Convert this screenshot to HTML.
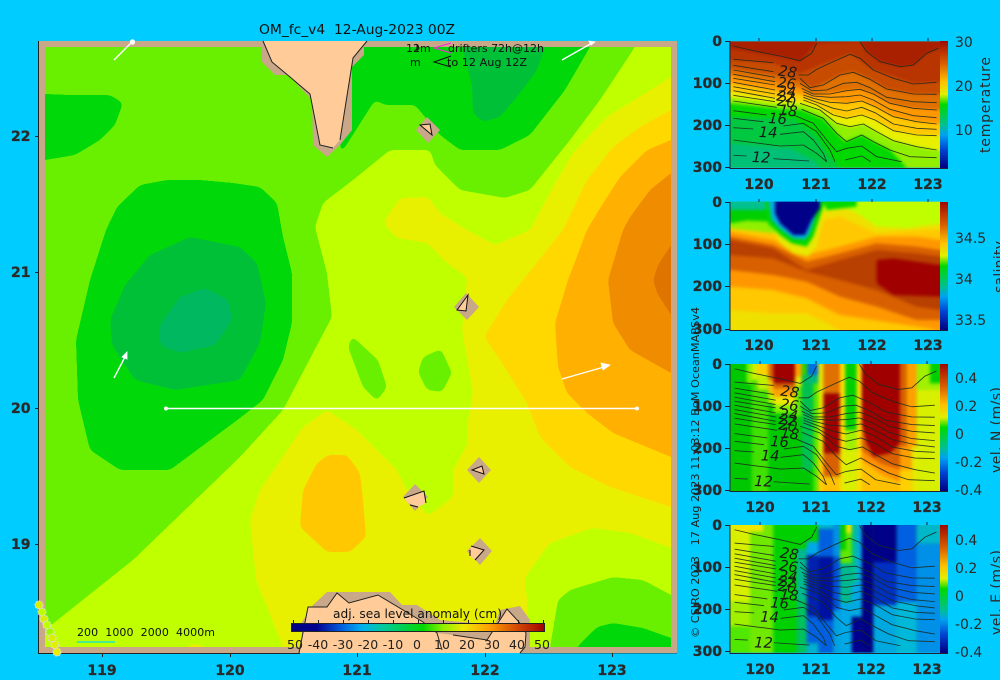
<!DOCTYPE html>
<html><head><meta charset="utf-8"><style>
html,body{margin:0;padding:0;background:#00ccff;width:1000px;height:680px;overflow:hidden}
svg{display:block;font-family:"DejaVu Sans","Liberation Sans",sans-serif}
.b{font-weight:bold;font-size:14px;fill:#2a2a2a;stroke:#2a2a2a;stroke-width:.3}
.n{font-size:14px;fill:#2a2a2a}
.c{font-size:44px;fill:#1a1a1a;font-style:italic}
.k{font-size:11px;fill:#111}
.cb{font-size:12.5px;fill:#222;text-anchor:middle}
</style></head><body>
<svg width="1000" height="680" viewBox="0 0 1000 680" xmlns="http://www.w3.org/2000/svg">
<defs>
<filter id="sm" x="-30%" y="-30%" width="160%" height="160%" color-interpolation-filters="sRGB"><feGaussianBlur stdDeviation="3"/><feComponentTransfer><feFuncA type="linear" slope="40" intercept="-19.5"/></feComponentTransfer></filter>
<filter id="bl" x="-5%" y="-5%" width="110%" height="110%" color-interpolation-filters="sRGB"><feGaussianBlur stdDeviation="5"/><feComponentTransfer><feFuncA type="linear" slope="100" intercept="0"/></feComponentTransfer></filter>
<clipPath id="mapc"><rect x="45" y="47" width="626" height="600"/></clipPath>
<clipPath id="c1"><rect x="150" y="64" width="630" height="379"/></clipPath>
<clipPath id="c2"><rect x="150" y="545" width="630" height="385"/></clipPath>
<clipPath id="c3"><rect x="150" y="42" width="630" height="381"/></clipPath>
<clipPath id="c4"><rect x="150" y="525" width="630" height="383"/></clipPath>
<linearGradient id="vb" x1="0" y1="0" x2="0" y2="1">
<stop offset="0" stop-color="#a00800"/><stop offset=".18" stop-color="#d86000"/><stop offset=".32" stop-color="#ffc000"/><stop offset=".42" stop-color="#e0f000"/><stop offset=".5" stop-color="#00d800"/><stop offset=".66" stop-color="#00c090"/><stop offset=".74" stop-color="#00a0f0"/><stop offset=".86" stop-color="#0040d0"/><stop offset="1" stop-color="#000080"/>
</linearGradient>
<linearGradient id="hb" x1="0" y1="0" x2="1" y2="0">
<stop offset="0" stop-color="#000080"/><stop offset=".1" stop-color="#000090"/><stop offset=".2" stop-color="#0060e0"/><stop offset=".28" stop-color="#00b0f0"/><stop offset=".36" stop-color="#00c8a0"/><stop offset=".52" stop-color="#00d800"/><stop offset=".6" stop-color="#90f000"/><stop offset=".68" stop-color="#f0e800"/><stop offset=".78" stop-color="#ffa000"/><stop offset=".88" stop-color="#d85000"/><stop offset="1" stop-color="#a00000"/>
</linearGradient>
<g id="cont" fill="none" stroke="#1c2a20" stroke-width="2.6" stroke-linejoin="round" stroke-opacity=".9">
<polyline points="160,78 220,92 300,108 360,122 395,100 410,70"/>
<polyline points="540,65 560,95 600,125 660,140 700,135 740,100 775,85"/>
<polyline points="160,118 280,128"/>
<polyline points="355,165 385,165 410,148 460,125 510,103 540,115 580,150 640,175 700,192 770,187"/>
<polyline points="160,136 280,155"/><polyline points="360,175 390,203 430,195 480,165 520,157 570,178 620,207 700,222 770,223"/>
<polyline points="160,150 285,172"/><polyline points="360,190 395,212 440,210 490,190 530,187 570,203 620,232 700,245 770,248"/>
<polyline points="160,163 285,185"/><polyline points="365,205 400,222 450,222 500,212 540,208 580,222 630,250 700,265 770,270"/>
<polyline points="160,175 285,195"/><polyline points="370,215 400,228 450,232 500,230 540,225 580,240 630,268 700,287 770,293"/>
<polyline points="160,187 285,210"/><polyline points="370,225 400,235 450,247 500,250 545,243 585,260 640,290 710,305 770,312"/>
<polyline points="160,200 285,222"/><polyline points="370,232 400,243 460,265 500,273 545,262 585,278 640,312 710,325 770,328"/>
<polyline points="160,212 285,235"/><polyline points="370,240 410,255 460,285 500,295 545,285 585,300 640,332 710,345 770,347"/>
<polyline points="160,226 285,245"/><polyline points="360,250 420,270 470,310 510,320 550,312 590,335 640,362 710,380 770,390"/>
<polyline points="160,243 290,262"/><polyline points="365,268 430,295 470,340 500,365 545,345 580,365 630,390 690,410 770,413"/>
<polyline points="160,272 260,285"/><polyline points="340,285 400,310 440,360 470,395 500,385 545,378 590,410 665,425"/>
<polyline points="160,295 250,305"/><polyline points="310,318 370,310 410,335 450,390 465,425"/>
<polyline points="160,323 220,327"/><polyline points="300,343 370,335 400,360 430,400 440,425"/>
<polyline points="160,360 300,378 370,375 410,400 440,425"/>
<polyline points="160,406 200,408"/><polyline points="280,416 388,423"/>
<polyline points="495,420 545,408 572,425"/>
</g>
</defs>

<rect width="1000" height="680" fill="#00ccff"/>

<!-- MAP -->
<rect x="39" y="41" width="638" height="612" fill="#c8a888"/>
<g clip-path="url(#mapc)">
<rect x="45" y="47" width="626" height="600" fill="#c0ff00"/>
<polygon filter="url(#sm)" fill="#e8f000" points="700,60 671,77 607,117 573,153 553,187 530,230 495,245 467,230 440,213 428,197 400,198 383,223 397,238 427,243 447,263 467,277 462,330 473,393 467,427 468,443 453,470 453,497 428,516 407,490 397,470 357,430 327,410 303,427 260,490 250,520 256,580 283,647 290,680 520,680 528,647 527,600 525,577 550,543 593,528 630,533 671,548 700,560"/>
<polygon filter="url(#sm)" fill="#e8f000" points="177,660 190,644 203,645 212,660"/>
<polygon filter="url(#sm)" fill="#ffd800" points="700,95 671,110 640,127 613,147 587,180 563,230 523,280 507,300 484,337 500,360 527,403 540,437 570,467 610,487 671,507 700,520"/>
<polygon filter="url(#sm)" fill="#ffc800" points="328,455 347,455 360,473 363,500 366,537 350,552 327,552 300,527 303,490 317,463"/>
<polygon filter="url(#sm)" fill="#ffb000" points="700,125 671,140 647,150 620,177 597,213 587,230 568,280 555,323 558,367 567,393 587,413 613,433 671,457 700,470"/>
<polygon filter="url(#sm)" fill="#f08c00" points="700,160 671,173 650,190 630,217 623,230 608,280 613,323 630,350 671,373 700,385"/>
<polygon filter="url(#sm)" fill="#e07400" points="700,225 671,245 658,265 653,280 657,293 671,315 700,340"/>
<polygon filter="url(#sm)" fill="#69f000" points="20,20 640,20 635,47 600,100 570,140 530,190 505,198 460,190 435,165 430,150 390,150 353,180 323,203 315,227 327,273 332,317 313,353 283,410 240,457 133,560 45,630 20,650"/>
<polygon filter="url(#sm)" fill="#69f000" points="352,336 378,360 387,387 377,401 363,387 348,347"/>
<polygon filter="url(#sm)" fill="#69f000" points="441,349 452,373 442,392 427,390 418,372 423,357"/>
<polygon filter="url(#sm)" fill="#69f000" points="550,670 550,647 558,600 570,590 613,577 643,580 671,595 700,610 700,670"/>
<polygon filter="url(#sm)" fill="#00d80a" points="577,670 577,647 597,627 613,623 643,628 671,638 700,645 700,670"/>
<polygon filter="url(#sm)" fill="#00d80a" points="340,155 375,100 385,105 415,105 440,135 460,150 500,150 530,135 565,90 590,47 600,20 352,20 340,100"/>
<polygon filter="url(#sm)" fill="#00d80a" points="20,93 70,95 110,95 123,103 115,125 100,140 75,155 45,160 20,165"/>
<polygon filter="url(#sm)" fill="#00d80a" points="106,230 117,207 140,185 167,180 200,180 233,183 260,187 277,203 283,237 292,273 292,323 283,360 263,400 240,418 170,470 120,470 90,450 78,400 76,340 90,280"/>
<polygon filter="url(#sm)" fill="#00c038" points="462,20 462,47 472,85 473,113 483,122 500,117 520,93 537,70 545,47 550,20"/>
<polygon filter="url(#sm)" fill="#00c038" points="190,237 240,247 257,263 266,303 260,343 240,380 175,390 135,380 112,345 110,320 125,285 150,255"/>
<polygon filter="url(#sm)" fill="#00b860" points="205,288 228,300 232,320 215,345 180,353 160,345 160,325 180,297"/>
</g>

<!-- land -->
<polygon fill="#c8a888" points="262,41 262,62 275,75 288,75 312,100 313,145 327,157 340,145 352,130 352,67 364,55 364,41"/>
<polygon fill="#ffcc99" points="263,41 272,62 290,77 310,94 320,145 333,148 340,140 353,58 367,41"/>
<polyline fill="none" stroke="#222" stroke-width="1" points="263,41 272,62 290,77 310,94 320,145 333,148"/>
<polyline fill="none" stroke="#222" stroke-width="1" points="340,140 353,58 367,41"/>
<polygon fill="#c8a888" points="427,117 440,130 428,143 416,130"/>
<polygon fill="#ffcc99" points="420,125 430,124 432,135"/>
<polygon fill="none" stroke="#111" stroke-width="1" points="420,125 430,124 432,135"/>
<polygon fill="#c8a888" points="466,293 479,307 467,320 454,307"/>
<polygon fill="#ffcc99" stroke="#111" stroke-width="1" points="468,295 457,310 466,311"/>
<polygon fill="#c8a888" points="479,457 491,470 479,483 467,470"/>
<polygon fill="#ffcc99" stroke="#111" stroke-width="1" points="472,470 482,466 484,474"/>
<polygon fill="#c8a888" points="415,484 428,497 415,511 403,497"/>
<polygon fill="#ffcc99" points="404,498 424,491 426,503 418,507 408,503"/>
<polyline fill="none" stroke="#111" stroke-width="1" points="404,498 424,491 426,503"/>
<polyline fill="none" stroke="#111" stroke-width="1" points="410,505 418,507"/>
<polygon fill="#c8a888" points="480,538 492,551 480,565 467,551"/>
<polygon fill="#ffcc99" points="471,546 484,550 475,560 470,556"/>
<polyline fill="none" stroke="#111" stroke-width="1" points="471,546 484,550 475,560"/>
<polyline fill="none" stroke="#111" stroke-width="1" points="470,550 470,556"/>

<polygon fill="#c8a888" points="280,647 302,647 302,622 313,605 327,592 390,592 402,605 417,605 440,620 495,625 500,610 520,606 530,620 530,647 530,653 280,653"/>
<polygon fill="#ffcc99" points="299,653 308,607 327,607 337,593 349,603 378,595 423,622 437,633 453,635 487,640 507,609 519,622 526,633 525,647 520,653"/>
<polyline fill="none" stroke="#222" stroke-width="1" points="299,653 308,607 327,607 337,593 349,603 378,595 423,622 437,633 442,650"/>
<polyline fill="none" stroke="#222" stroke-width="1" points="453,635 487,640 507,609 519,622 526,633 525,647 520,653"/>

<line x1="38.5" y1="41" x2="38.5" y2="653.5" stroke="#222" stroke-width="1"/>
<line x1="38" y1="653.5" x2="300" y2="653.5" stroke="#222" stroke-width="1"/>
<line x1="520" y1="653.5" x2="677" y2="653.5" stroke="#222" stroke-width="1" stroke-opacity=".4"/>

<!-- map ticks -->
<g stroke="#222" stroke-width="1">
<line x1="35" y1="136.5" x2="39" y2="136.5"/><line x1="35" y1="272.5" x2="39" y2="272.5"/><line x1="35" y1="408.5" x2="39" y2="408.5"/><line x1="35" y1="544.5" x2="39" y2="544.5"/>
<line x1="102.5" y1="653" x2="102.5" y2="657"/><line x1="230.5" y1="653" x2="230.5" y2="657"/><line x1="357.5" y1="653" x2="357.5" y2="657"/><line x1="485.5" y1="653" x2="485.5" y2="657"/><line x1="612.5" y1="653" x2="612.5" y2="657"/>
</g>
<g>
<text x="11" y="141" class="b">22</text><text x="11" y="277" class="b">21</text><text x="11" y="413" class="b">20</text><text x="11" y="549" class="b">19</text>
<text x="102" y="675" text-anchor="middle" class="b">119</text><text x="230" y="675" text-anchor="middle" class="b">120</text><text x="357" y="675" text-anchor="middle" class="b">121</text><text x="485" y="675" text-anchor="middle" class="b">122</text><text x="612" y="675" text-anchor="middle" class="b">123</text>
</g>

<!-- track and arrows -->
<line x1="166" y1="408.5" x2="637" y2="408.5" stroke="#fff" stroke-width="1.4"/>
<circle cx="166" cy="408.5" r="2" fill="#fff"/><circle cx="637" cy="408.5" r="2" fill="#fff"/>
<g stroke="#fff" stroke-width="1.4" fill="#fff">
<line x1="114" y1="60" x2="132" y2="42"/><circle cx="132.500" cy="42" r="2"/>
<line x1="562" y1="60" x2="592" y2="43"/><polygon points="595,42 589,41 591,45" stroke-width=".8"/>
<line x1="114" y1="378" x2="126" y2="355"/><polygon points="127,352 122,357 127,359" stroke-width=".8"/>
<line x1="562" y1="379" x2="604" y2="367"/><polygon points="610,365 601,363 603,370" stroke-width=".8"/>
</g>

<!-- dots -->
<g stroke="#dde" stroke-width="1" stroke-dasharray="2 1">
<circle cx="39" cy="605" r="4" fill="#d8f000"/><circle cx="42" cy="612" r="4" fill="#c0ff00"/><circle cx="44" cy="619" r="4" fill="#d8f000"/><circle cx="47" cy="625" r="4" fill="#c0ff00"/><circle cx="50" cy="632" r="4" fill="#a0f800"/><circle cx="52" cy="638" r="4" fill="#d8f000"/><circle cx="55" cy="645" r="4" fill="#e0f000"/><circle cx="57" cy="652" r="4" fill="#e8f000"/>
</g>

<!-- title and legends -->
<text x="259" y="34" font-size="13.5" fill="#111" textLength="196" lengthAdjust="spacingAndGlyphs" xml:space="preserve">OM_fc_v4  12-Aug-2023 00Z</text>
<text x="406" y="52" class="k">12m</text>
<text x="448" y="52" class="k" textLength="96" lengthAdjust="spacingAndGlyphs">drifters 72h@12h</text>
<text x="410" y="66" class="k">m</text>
<text x="447" y="66" class="k" textLength="80" lengthAdjust="spacingAndGlyphs">to 12 Aug 12Z</text>
<polyline fill="none" stroke="#ff20e0" stroke-width="1" points="451,43 434,48 451,53"/>
<polyline fill="none" stroke="#111" stroke-width="1" points="451,56 434,62 451,67"/>
<polygon fill="none" stroke="#111" stroke-width="1" points="417,45 419,48 417,51"/>

<text x="77" y="636" class="k" textLength="138" xml:space="preserve">200  1000  2000  4000m</text>
<line x1="77" y1="642" x2="115" y2="642" stroke="#00e0e0" stroke-width="1.2"/>

<text x="333" y="618" font-size="12" fill="#111" textLength="169" lengthAdjust="spacingAndGlyphs">adj. sea level anomaly (cm)</text>
<rect x="291" y="623" width="254" height="9" fill="url(#hb)"/>
<rect x="291.500" y="623.500" width="253" height="8" fill="none" stroke="#222" stroke-width="1"/>
<g stroke="#222" stroke-width="1">
<line x1="293.500" y1="620" x2="293.500" y2="623"/><line x1="318.500" y1="620" x2="318.500" y2="623"/><line x1="343.500" y1="620" x2="343.500" y2="623"/><line x1="368.500" y1="620" x2="368.500" y2="623"/><line x1="393.500" y1="620" x2="393.500" y2="623"/><line x1="418.500" y1="620" x2="418.500" y2="623"/><line x1="443.500" y1="620" x2="443.500" y2="623"/><line x1="468.500" y1="620" x2="468.500" y2="623"/><line x1="493.500" y1="620" x2="493.500" y2="623"/><line x1="518.500" y1="620" x2="518.500" y2="623"/><line x1="543.500" y1="620" x2="543.500" y2="623"/>
</g>
<g>
<text x="295" y="649" class="cb">50</text><text x="318" y="649" class="cb">-40</text><text x="343" y="649" class="cb">-30</text><text x="368" y="649" class="cb">-20</text><text x="393" y="649" class="cb">-10</text><text x="417" y="649" class="cb">0</text><text x="442" y="649" class="cb">10</text><text x="467" y="649" class="cb">20</text><text x="492" y="649" class="cb">30</text><text x="517" y="649" class="cb">40</text><text x="542" y="649" class="cb">50</text>
</g>

<!-- PANEL 1 temperature -->
<g transform="translate(680,20) scale(.33333)">
<g clip-path="url(#c1)">
<g filter="url(#bl)">
<rect x="150" y="64" width="630" height="379" fill="#a82000"/>
<polygon fill="#b83400" points="150,85 300,110 360,125 410,70 540,64 560,95 600,125 660,140 700,135 740,100 780,85 780,443 150,443"/>
<polygon fill="#c84c00" points="150,120 280,130 360,160 410,140 510,100 580,150 700,190 780,185 780,443 150,443"/>
<polygon fill="#e07000" points="150,145 285,165 360,185 400,205 480,165 520,155 570,178 620,207 700,222 780,223 780,443 150,443"/>
<polygon fill="#ff9800" points="150,165 285,188 365,205 400,225 500,212 540,208 580,222 630,250 700,265 780,270 780,443 150,443"/>
<polygon fill="#ffc800" points="150,190 285,212 370,225 400,235 500,250 545,243 585,260 640,290 710,305 780,312 780,443 150,443"/>
<polygon fill="#e8f000" points="150,215 285,235 370,242 410,255 460,285 500,295 545,285 585,300 640,332 710,345 780,347 780,443 150,443"/>
<polygon fill="#90f000" points="150,232 285,250 360,252 420,272 470,310 510,322 550,312 590,335 640,362 710,380 780,392 780,443 150,443"/>
<polygon fill="#00d800" points="150,250 290,265 365,270 430,297 470,340 495,365 545,345 580,365 630,390 680,443 150,443"/>
<polygon fill="#00c840" points="150,290 340,295 410,345 450,410 480,443 150,443"/>
<polygon fill="#00c078" points="150,370 330,385 400,420 420,443 150,443"/>
</g>
<use href="#cont"/>
</g>
<text class="c" transform="translate(293,166) rotate(8)">28</text>
<text class="c" transform="translate(290,201) rotate(8)">26</text>
<text class="c" transform="translate(290,226) rotate(8)">24</text>
<text class="c" transform="translate(288,241) rotate(8)">22</text>
<text class="c" transform="translate(290,256) rotate(8)">20</text>
<text class="c" transform="translate(295,284) rotate(6)">18</text>
<text class="c" transform="translate(264,309) rotate(4)">16</text>
<text class="c" transform="translate(236,351) rotate(2)">14</text>
<text class="c" transform="translate(215,426) rotate(2)">12</text>
</g>

<!-- PANEL 2 salinity -->
<g transform="translate(680,20) scale(.33333)">
<g clip-path="url(#c2)">
<g filter="url(#bl)">
<rect x="150" y="545" width="630" height="385" fill="#f0e000"/>
<polygon fill="#c0ff00" points="430,545 780,545 780,610 680,625 590,620 540,585 500,565 430,575"/>
<polygon fill="#ffc800" points="150,620 280,640 380,690 430,600 480,590 590,640 710,630 780,630 780,930 480,930 380,880 280,880 150,870"/>
<polygon fill="#ff9800" points="150,635 280,660 380,705 480,680 590,650 710,650 780,660 780,930 480,885 380,835 280,810 150,800"/>
<polygon fill="#d86000" points="150,650 280,675 380,725 480,700 590,670 710,680 780,690 780,900 710,900 590,860 480,830 380,785 280,765 150,750"/>
<polygon fill="#b84000" points="150,660 280,685 380,750 480,720 590,690 710,700 780,710 780,870 710,860 590,810 480,780 380,755 280,715 150,705"/>
<polygon fill="#a00000" points="590,720 640,715 780,735 780,830 640,825 590,790"/>
<rect x="150" y="545" width="115" height="27" fill="#00c090"/>
<polygon fill="#00d000" points="150,570 265,570 265,605 200,602 150,612"/>
<polygon fill="#90f000" points="150,610 200,602 265,605 290,640 150,625"/>
<polygon fill="#e8e800" points="265,600 430,560 430,600 410,680 385,710 340,700 300,670"/>
<polygon fill="#00d800" points="430,545 530,545 530,560 440,570"/>
<polygon fill="#00d800" points="255,545 435,545 420,590 400,650 380,680 335,670 300,645 265,612"/>
<polygon fill="#00b0e0" points="265,545 425,545 408,580 388,640 375,658 340,655 305,630 275,600"/>
<polygon fill="#000088" points="285,545 420,545 420,565 395,600 375,645 340,645 300,610 285,580"/>
</g>
</g>
</g>

<!-- PANEL 3 vel N -->
<g transform="translate(680,350) scale(.33333)">
<g clip-path="url(#c3)">
<g filter="url(#bl)">
<rect x="150" y="42" width="630" height="381" fill="#00c800"/>
<rect x="215" y="42" width="50" height="381" fill="#40e000"/>
<rect x="200" y="42" width="15" height="58" fill="#80f000"/>
<rect x="215" y="42" width="17" height="48" fill="#d0f000"/>
<rect x="232" y="42" width="33" height="33" fill="#ffd000"/><rect x="232" y="75" width="33" height="45" fill="#c0f000"/>
<rect x="265" y="42" width="15" height="48" fill="#e06000"/><rect x="265" y="90" width="15" height="40" fill="#ffc000"/><rect x="265" y="130" width="15" height="30" fill="#c0f000"/>
<rect x="280" y="42" width="65" height="58" fill="#a00000"/><rect x="280" y="100" width="65" height="15" fill="#d86000"/><rect x="280" y="115" width="65" height="25" fill="#ffa000"/><rect x="280" y="140" width="65" height="25" fill="#f0e800"/><rect x="280" y="165" width="65" height="25" fill="#80f000"/>
<rect x="345" y="42" width="20" height="38" fill="#ffa000"/><rect x="345" y="80" width="20" height="30" fill="#e8e800"/><rect x="345" y="110" width="20" height="90" fill="#60e800"/>
<rect x="365" y="42" width="17" height="33" fill="#30d000"/><rect x="365" y="75" width="35" height="285" fill="#00c050"/>
<rect x="382" y="42" width="33" height="33" fill="#0070e0"/><rect x="382" y="75" width="33" height="25" fill="#00b880"/>
<rect x="400" y="100" width="15" height="323" fill="#50e800"/>
<rect x="415" y="42" width="17" height="381" fill="#e8e800"/><rect x="415" y="320" width="17" height="103" fill="#ffd000"/>
<rect x="430" y="42" width="50" height="88" fill="#e07000"/><rect x="430" y="130" width="50" height="180" fill="#a00000"/><rect x="430" y="310" width="50" height="70" fill="#d86000"/><rect x="430" y="380" width="50" height="43" fill="#ffc000"/>
<rect x="480" y="42" width="15" height="258" fill="#ffe000"/><rect x="480" y="300" width="15" height="123" fill="#e8e800"/>
<rect x="495" y="42" width="35" height="198" fill="#00d000"/><rect x="495" y="240" width="35" height="60" fill="#a0f000"/><rect x="495" y="300" width="35" height="123" fill="#d8f000"/>
<rect x="530" y="42" width="15" height="381" fill="#ffe000"/>
<rect x="545" y="42" width="120" height="381" fill="#ffc000"/>
<polygon fill="#ff9000" points="545,42 665,42 665,400 600,370 545,330"/>
<polygon fill="#d86000" points="545,42 665,42 665,360 600,340 545,300"/>
<polygon fill="#a00000" points="545,42 660,42 660,280 630,310 580,320 560,280 545,220"/>
<rect x="660" y="42" width="20" height="250" fill="#d86000"/><rect x="660" y="290" width="35" height="70" fill="#ffa000"/><rect x="660" y="360" width="35" height="63" fill="#ffd000"/>
<rect x="680" y="42" width="30" height="250" fill="#ffa000"/>
<rect x="695" y="290" width="17" height="133" fill="#e8e800"/>
<rect x="710" y="42" width="70" height="381" fill="#d8f000"/>
<rect x="710" y="42" width="70" height="78" fill="#a0f000"/>
<rect x="750" y="42" width="30" height="58" fill="#00d000"/>
</g>
<use href="#cont" transform="translate(6,-22) scale(.985,1.003)"/>
</g>
<text class="c" transform="translate(300,136) rotate(8)">28</text>
<text class="c" transform="translate(298,176) rotate(8)">26</text>
<text class="c" transform="translate(296,206) rotate(8)">24</text>
<text class="c" transform="translate(294,221) rotate(8)">22</text>
<text class="c" transform="translate(294,238) rotate(8)">20</text>
<text class="c" transform="translate(300,263) rotate(6)">18</text>
<text class="c" transform="translate(270,288) rotate(4)">16</text>
<text class="c" transform="translate(242,331) rotate(2)">14</text>
<text class="c" transform="translate(222,408) rotate(2)">12</text>
</g>

<!-- PANEL 4 vel E -->
<g transform="translate(680,350) scale(.33333)">
<g clip-path="url(#c4)">
<g filter="url(#bl)">
<rect x="150" y="525" width="630" height="383" fill="#00d000"/>
<rect x="150" y="525" width="60" height="230" fill="#d8f000"/><rect x="150" y="755" width="60" height="75" fill="#a0f000"/><rect x="150" y="830" width="60" height="78" fill="#50e800"/>
<rect x="210" y="525" width="70" height="383" fill="#70e800"/>
<rect x="165" y="525" width="85" height="20" fill="#f0e800"/>
<rect x="280" y="525" width="70" height="383" fill="#00d000"/>
<rect x="350" y="596" width="30" height="154" fill="#00b890"/><rect x="350" y="750" width="30" height="158" fill="#00c060"/>
<rect x="380" y="575" width="35" height="40" fill="#00a8e8"/><rect x="380" y="615" width="35" height="185" fill="#0020b0"/><rect x="380" y="800" width="35" height="80" fill="#0060e0"/><rect x="380" y="880" width="35" height="28" fill="#00b0d0"/>
<rect x="415" y="525" width="45" height="11" fill="#00b8d0"/><rect x="415" y="536" width="45" height="84" fill="#0060e0"/><rect x="415" y="620" width="45" height="190" fill="#0010a0"/><rect x="415" y="810" width="45" height="98" fill="#0060e0"/>
<rect x="460" y="525" width="20" height="95" fill="#0090e8"/><rect x="460" y="620" width="20" height="160" fill="#0050d8"/><rect x="460" y="780" width="20" height="128" fill="#00a0e0"/>
<rect x="480" y="600" width="35" height="40" fill="#60e800"/><rect x="480" y="640" width="35" height="120" fill="#00b890"/><rect x="480" y="760" width="35" height="148" fill="#00a8e8"/>
<rect x="498" y="525" width="17" height="25" fill="#f0e800"/><rect x="498" y="550" width="17" height="90" fill="#60e800"/>
<rect x="515" y="525" width="15" height="175" fill="#00c090"/><rect x="515" y="700" width="15" height="100" fill="#00a8e8"/><rect x="515" y="800" width="30" height="108" fill="#000090"/>
<rect x="530" y="525" width="15" height="275" fill="#00a8e8"/>
<rect x="545" y="525" width="35" height="383" fill="#000085"/>
<rect x="580" y="525" width="70" height="111" fill="#000088"/><rect x="580" y="636" width="70" height="130" fill="#0030c0"/><rect x="580" y="766" width="70" height="142" fill="#00a8e0"/>
<rect x="650" y="525" width="60" height="231" fill="#0060e0"/><rect x="650" y="756" width="60" height="152" fill="#00b8d8"/>
<rect x="710" y="525" width="70" height="55" fill="#00b8c8"/><rect x="710" y="580" width="70" height="328" fill="#0090e8"/>
</g>
<use href="#cont" transform="translate(6,461) scale(.985,1.003)"/>
</g>
<text class="c" transform="translate(298,622) rotate(8)">28</text>
<text class="c" transform="translate(296,660) rotate(8)">26</text>
<text class="c" transform="translate(294,690) rotate(8)">24</text>
<text class="c" transform="translate(292,706) rotate(8)">22</text>
<text class="c" transform="translate(292,722) rotate(8)">20</text>
<text class="c" transform="translate(298,747) rotate(6)">18</text>
<text class="c" transform="translate(270,772) rotate(4)">16</text>
<text class="c" transform="translate(240,815) rotate(2)">14</text>
<text class="c" transform="translate(222,892) rotate(2)">12</text>
</g>

<!-- panel frames, colorbars -->
<g fill="url(#vb)">
<rect x="940" y="41" width="8" height="127"/><rect x="940" y="202" width="8" height="128"/><rect x="940" y="364" width="8" height="127"/><rect x="940" y="525" width="8" height="128"/>
</g>
<g fill="none" stroke="#223" stroke-width="1">
<path d="M730,41V168.500H948M730,202V330.500H948M730,364V491.500H948M730,525V653.500H948"/>
<path d="M725,41.500H730M725,83.500H730M725,125.500H730M725,167.500H730M725,202.500H730M725,244.500H730M725,286.500H730M725,329.500H730M725,364.500H730M725,406.500H730M725,448.500H730M725,490.500H730M725,525.500H730M725,567.500H730M725,609.500H730M725,651.500H730"/>
<path d="M759,41V38M816,41V38M872,41V38M928,41V38M759,202V199M816,202V199M872,202V199M928,202V199M760,364V361M816,364V361M871,364V361M927,364V361M760,525V522M816,525V522M871,525V522M927,525V522"/>
</g>
<g>
<text x="722" y="46" text-anchor="end" class="b">0</text><text x="722" y="88" text-anchor="end" class="b">100</text><text x="722" y="130" text-anchor="end" class="b">200</text><text x="722" y="172" text-anchor="end" class="b">300</text>
<text x="722" y="207" text-anchor="end" class="b">0</text><text x="722" y="249" text-anchor="end" class="b">100</text><text x="722" y="291" text-anchor="end" class="b">200</text><text x="722" y="334" text-anchor="end" class="b">300</text>
<text x="722" y="369" text-anchor="end" class="b">0</text><text x="722" y="411" text-anchor="end" class="b">100</text><text x="722" y="453" text-anchor="end" class="b">200</text><text x="722" y="495" text-anchor="end" class="b">300</text>
<text x="722" y="530" text-anchor="end" class="b">0</text><text x="722" y="572" text-anchor="end" class="b">100</text><text x="722" y="614" text-anchor="end" class="b">200</text><text x="722" y="656" text-anchor="end" class="b">300</text>
<text x="759" y="189" text-anchor="middle" class="b">120</text><text x="816" y="189" text-anchor="middle" class="b">121</text><text x="872" y="189" text-anchor="middle" class="b">122</text><text x="928" y="189" text-anchor="middle" class="b">123</text>
<text x="759" y="350" text-anchor="middle" class="b">120</text><text x="816" y="350" text-anchor="middle" class="b">121</text><text x="872" y="350" text-anchor="middle" class="b">122</text><text x="928" y="350" text-anchor="middle" class="b">123</text>
<text x="760" y="512" text-anchor="middle" class="b">120</text><text x="816" y="512" text-anchor="middle" class="b">121</text><text x="871" y="512" text-anchor="middle" class="b">122</text><text x="927" y="512" text-anchor="middle" class="b">123</text>
<text x="760" y="674" text-anchor="middle" class="b">120</text><text x="816" y="674" text-anchor="middle" class="b">121</text><text x="871" y="674" text-anchor="middle" class="b">122</text><text x="927" y="674" text-anchor="middle" class="b">123</text>
</g>
<g>
<text x="955" y="47" class="n">30</text><text x="955" y="91" class="n">20</text><text x="955" y="135" class="n">10</text>
<text x="955" y="243" class="n">34.5</text><text x="955" y="284" class="n">34</text><text x="955" y="325" class="n">33.5</text>
<text x="955" y="383" class="n">0.4</text><text x="955" y="411" class="n">0.2</text><text x="955" y="439" class="n">0</text><text x="955" y="467" class="n">-0.2</text><text x="955" y="495" class="n">-0.4</text>
<text x="955" y="545" class="n">0.4</text><text x="955" y="573" class="n">0.2</text><text x="955" y="601" class="n">0</text><text x="955" y="629" class="n">-0.2</text><text x="955" y="657" class="n">-0.4</text>
</g>
<text transform="translate(990,153) rotate(-90)" class="n" font-size="14" textLength="96">temperature</text>
<text transform="translate(1004,293) rotate(-90)" class="n" textLength="52">salinity</text>
<text transform="translate(1001,473) rotate(-90)" class="n" textLength="86">vel. N (m/s)</text>
<text transform="translate(1001,635) rotate(-90)" class="n" textLength="85">vel. E (m/s)</text>
<text transform="translate(699,638) rotate(-90)" font-size="11" fill="#222" textLength="331" lengthAdjust="spacingAndGlyphs" xml:space="preserve">© CSIRO 2023   17 Aug 2023 11:03:12 BoM OceanMAPSv4</text>
</svg>
</body></html>
